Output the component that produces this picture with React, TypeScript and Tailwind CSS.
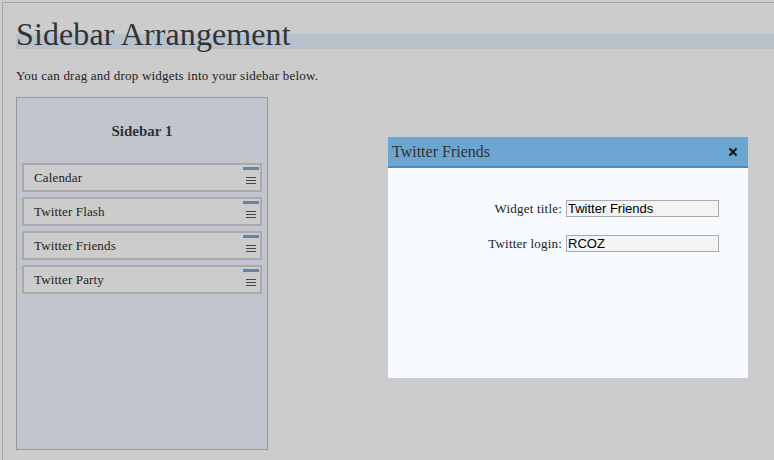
const widgets = ["Calendar", "Twitter Flash", "Twitter Friends", "Twitter Party"];

const serif = "font-['Liberation_Serif',serif]";

function Grip() {
  return (
    <div className="flex flex-col items-end gap-[7px] pt-[2px] pr-[1px]">
      <div className="h-[3px] w-[16px] bg-[#5b87ad]" />
      <div className="flex w-[16px] flex-col items-center gap-[2px]">
        <div className="h-px w-[10px] bg-[#444]" />
        <div className="h-px w-[10px] bg-[#444]" />
        <div className="h-px w-[10px] bg-[#444]" />
      </div>
    </div>
  );
}

export default function App() {
  return (
    <div className={`relative h-[460px] w-[774px] overflow-hidden bg-[#cccccc] pl-[2px] pt-[2px] text-[#222] ${serif}`}>
      <div className="h-full border-l border-t border-[#a8a8a8] pl-[13px]">
        <h1 className="mt-[13px] h-[36px] bg-[linear-gradient(to_bottom,transparent_18px,#b8c2cc_18px,#b8c2cc_33px,transparent_33px)] text-[32px] leading-[36px] tracking-[0.1px] text-[#333]">
          Sidebar Arrangement
        </h1>
        <p className="mt-[15px] text-[13px] leading-[18px] tracking-[0.22px]">
          You can drag and drop widgets into your sidebar below.
        </p>

        <div className="mt-[12px] h-[353px] w-[252px] border border-[#999] bg-[#c1c5cd]">
          <h2 className="pt-[24px] text-center text-[15px] font-bold leading-[18px] text-[#333]">
            Sidebar 1
          </h2>
          <div className="mt-[23px] flex flex-col gap-[5px] px-[5px]">
            {widgets.map((w) => (
              <div
                key={w}
                className="flex h-[29px] items-stretch justify-between border-2 border-[#aaa] bg-[#cccccc] pl-[10px]"
              >
                <span className="self-center pt-[1px] text-[13px] leading-[16px] tracking-[0.15px]">{w}</span>
                <Grip />
              </div>
            ))}
          </div>
        </div>
      </div>

      <div className="absolute left-[388px] top-[137px] flex h-[241px] w-[360px] flex-col bg-[#f7fbff]">
        <div className="flex h-[31px] items-center justify-between border-b-2 border-[#4a8abf] bg-[#6ba5d2] pl-[4px] pr-[10px]">
          <span className="text-[16px] leading-[20px] text-[#333]">Twitter Friends</span>
          <svg width="10" height="10" viewBox="0 0 10 10" className="mt-[1px]">
            <path d="M1.5 1.5L8.5 8.5M8.5 1.5L1.5 8.5" stroke="#111" strokeWidth="2" />
          </svg>
        </div>
        <div className="mt-[32px] grid grid-cols-[174px_153px] items-center gap-x-[4px] gap-y-[18px] text-[13px] tracking-[0.2px]">
          <label className="text-right leading-[17px]">Widget title:</label>
          <input
            defaultValue="Twitter Friends"
            className="h-[17px] border border-[#aaa] bg-[#f3f3f3] px-[1px] font-['Liberation_Sans',sans-serif] text-[13px] leading-[15px] tracking-normal text-black outline-none"
          />
          <label className="text-right leading-[17px]">Twitter login:</label>
          <input
            defaultValue="RCOZ"
            className="h-[17px] border border-[#aaa] bg-[#f3f3f3] px-[1px] font-['Liberation_Sans',sans-serif] text-[13px] leading-[15px] tracking-normal text-black outline-none"
          />
        </div>
      </div>
    </div>
  );
}
